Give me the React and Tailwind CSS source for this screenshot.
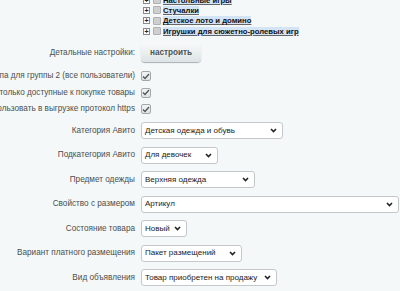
import React from 'react';

const treeItems = [
    'Настольные игры',
    'Стучалки',
    'Детское лото и домино',
    'Игрушки для сюжетно-ролевых игр',
];

const checkRows = [
    'Выгружать цены типа для группы 2 (все пользователи)',
    'Выгружать только доступные к покупке товары',
    'Использовать в выгрузке протокол https',
];

const selectRows = [
    { label: 'Категория Авито', value: 'Детская одежда и обувь', width: 'w-[142px]' },
    { label: 'Подкатегория Авито', value: 'Для девочек', width: 'w-[77px]' },
    { label: 'Предмет одежды', value: 'Верхняя одежда', width: 'w-[114px]' },
    { label: 'Свойство с размером', value: 'Артикул', width: 'w-[258px]' },
    { label: 'Состояние товара', value: 'Новый', width: 'w-[46px]' },
    { label: 'Вариант платного размещения', value: 'Пакет размещений', width: 'w-[101px]' },
    { label: 'Вид объявления', value: 'Товар приобретен на продажу', width: 'w-[136px]' },
];

const Label = ({ children }) => (
    <div className="w-[135px] shrink-0 flex justify-end whitespace-nowrap text-[8.2px] leading-[10px] text-[#4a4f50]">
        {children}
    </div>
);

const FakeSelect = ({ value, width }) => (
    <div className={`${width} h-[17px] shrink-0 flex items-center justify-between bg-white border border-[#c3c8ca] rounded-[3px] pl-[3px] pr-[5px]`}>
        <span className="whitespace-nowrap text-[8px] leading-none text-[#222]">{value}</span>
        <svg width="7" height="5" viewBox="0 0 7 5" className="shrink-0">
            <path d="M1 1 L3.5 3.5 L6 1" fill="none" stroke="#222" strokeWidth="1.6" />
        </svg>
    </div>
);

export default function App() {
    return (
        <div className="w-[400px] h-[291px] overflow-hidden bg-[#f4f8f8] font-['Liberation_Sans',Arial,sans-serif]">
            {/* tree of categories */}
            <div className="mt-[-5px]">
                {treeItems.map((item) => (
                    <div key={item} className="h-[10.3px] flex items-center pl-[143px]">
                        <span className="w-[7px] h-[7px] border border-[#8a8a8a] bg-white flex items-center justify-center text-[7px] leading-none font-bold text-[#222]">+</span>
                        <span className="ml-[3px] w-[8px] h-[8px] border border-[#b0b0b0] bg-[#cfcfcf] rounded-[1px]" />
                        <span className="ml-[2px] whitespace-nowrap text-[7.7px] font-bold text-[#111] bg-[#d3e4f6] underline decoration-[#666] leading-[9px]">
                            {item}
                        </span>
                    </div>
                ))}
            </div>

            <div className="mt-[7px] h-[19px] flex items-center gap-[6px]">
                <Label>Детальные настройки:</Label>
                <button className="h-[19px] px-[9px] rounded-[4px] bg-gradient-to-b from-[#f8fafa] to-[#dde4e5] shadow-[0_1px_1px_rgba(0,0,0,0.3)] text-[8.2px] font-bold text-[#4b5556]">
                    настроить
                </button>
            </div>

            <div className="mt-[5.75px]">
                {checkRows.map((row) => (
                    <div key={row} className="h-[16.5px] flex items-center gap-[6px]">
                        <Label>{row}</Label>
                        <span className="w-[10px] h-[10px] border border-[#a3a9aa] rounded-[2px] bg-gradient-to-b from-[#f3f5f5] to-[#dfe3e3] flex items-center justify-center">
                            <svg width="8" height="7" viewBox="0 0 8 7">
                                <path d="M1 3.5 L3 5.5 L7 1" fill="none" stroke="#555" strokeWidth="1.3" />
                            </svg>
                        </span>
                    </div>
                ))}
            </div>

            <div className="mt-[1px]">
                {selectRows.map((row) => (
                    <div key={row.label} className="h-[24.5px] flex items-center gap-[6px]">
                        <Label>{row.label}</Label>
                        <FakeSelect value={row.value} width={row.width} />
                    </div>
                ))}
            </div>
        </div>
    );
}
